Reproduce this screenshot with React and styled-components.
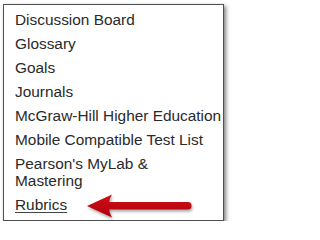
import React from "react";
import styled, { createGlobalStyle } from "styled-components";

const Global = createGlobalStyle`
  html, body { margin: 0; padding: 0; background: #ffffff; }
  body { font-family: "Liberation Sans", Arial, sans-serif; }
`;

const Page = styled.div`
  padding: 4px 0 0 3px;
`;

const Panel = styled.div`
  position: relative;
  box-sizing: border-box;
  width: 221px;
  height: 217px;
  border: 1px solid #505050;
  background: #ffffff;
  box-shadow: 2px 2px 4px rgba(0, 0, 0, 0.5);
  padding: 2px 0 0 11px;
`;

const List = styled.ul`
  list-style: none;
  margin: 0;
  padding: 0;
`;

const Item = styled.li`
  font-family: "Liberation Sans", Arial, sans-serif;
  font-size: 15.4px;
  line-height: 17px;
  padding: 3.5px 0;
  color: #2a2a2a;
  white-space: nowrap;
  text-decoration: ${(p) => (p.$underline ? "underline" : "none")};
  text-decoration-color: #444;
  text-underline-offset: 2px;
`;

const Arrow = styled.svg`
  position: absolute;
  left: 80px;
  top: 184px;
  overflow: visible;
  filter: drop-shadow(1px 2px 1.5px rgba(0, 0, 0, 0.35));
`;

const items = [
  ["Discussion Board"],
  ["Glossary"],
  ["Goals"],
  ["Journals"],
  ["McGraw-Hill Higher Education"],
  ["Mobile Compatible Test List"],
  ["Pearson's MyLab &", "Mastering"],
];

export default function App() {
  return (
    <>
      <Global />
      <Page>
        <Panel>
          <List>
            {items.map((lines) => (
              <Item key={lines.join(" ")}>
                {lines.map((l, i) => (
                  <React.Fragment key={l}>
                    {i > 0 && <br />}
                    {l}
                  </React.Fragment>
                ))}
              </Item>
            ))}
            <Item $underline>Rubrics</Item>
          </List>
          <Arrow width="112" height="34" viewBox="0 0 112 34">
            <defs>
              <linearGradient id="ar" x1="0" y1="0" x2="0" y2="1">
                <stop offset="0" stopColor="#d0101a" />
                <stop offset="1" stopColor="#b0000a" />
              </linearGradient>
            </defs>
            <path
              d="M3 17 L28 5.5 Q25 11 25.5 13 L104 13 Q107.5 13 107.5 16.8 Q107.5 20.6 104 20.6 L25.5 20.6 Q25 23 28 28.5 Z"
              fill="url(#ar)"
            />
          </Arrow>
        </Panel>
      </Page>
    </>
  );
}
